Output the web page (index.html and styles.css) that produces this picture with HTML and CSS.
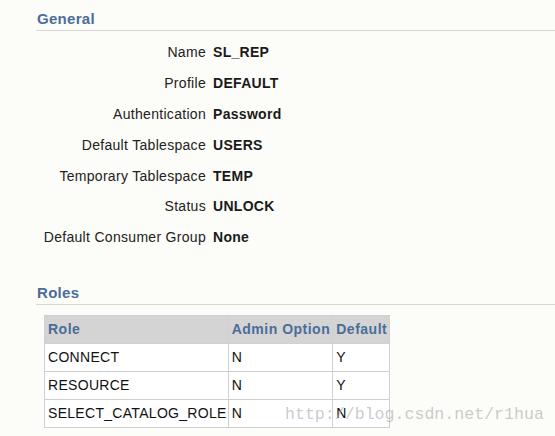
FILE: index.html
```html
<!DOCTYPE html>
<html lang="en">
<head>
    <meta charset="UTF-8">
    <title>User SL_REP</title>
    <link rel="stylesheet" href="styles.css">
</head>
<body>
    <div class="pagina">
        <h2 class="secao">General</h2>
        <div class="geral">
            <span class="rotulo">Name</span><span class="valor">SL_REP</span>
            <span class="rotulo">Profile</span><span class="valor">DEFAULT</span>
            <span class="rotulo">Authentication</span><span class="valor">Password</span>
            <span class="rotulo">Default Tablespace</span><span class="valor">USERS</span>
            <span class="rotulo">Temporary Tablespace</span><span class="valor">TEMP</span>
            <span class="rotulo">Status</span><span class="valor">UNLOCK</span>
            <span class="rotulo">Default Consumer Group</span><span class="valor">None</span>
        </div>

        <h2 class="secao roles">Roles</h2>
        <table class="tabela">
            <thead>
                <tr><th>Role</th><th>Admin Option</th><th>Default</th></tr>
            </thead>
            <tbody>
                <tr><td>CONNECT</td><td>N</td><td>Y</td></tr>
                <tr><td>RESOURCE</td><td>N</td><td>Y</td></tr>
                <tr><td>SELECT_CATALOG_ROLE</td><td>N</td><td>N</td></tr>
            </tbody>
        </table>
    </div>
    <div class="marca">http://blog.csdn.net/r1hua</div>
</body>
</html>
```

FILE: styles.css
```css
body {
    margin: 0;
    background-color: #fcfcf8;
    font-family: "Liberation Sans", Arial, sans-serif;
    color: #111;
    position: relative;
    height: 436px;
    overflow: hidden;
}

.pagina {
    padding: 10px 0 0 36px;
}

.secao {
    margin: 0;
    font-size: 15px;
    line-height: 18px;
    font-weight: bold;
    letter-spacing: 0.3px;
    color: #4a6d99;
    padding: 0 0 2px 1px;
    border-bottom: 1px solid #d6d6d4;
}

.geral {
    display: grid;
    grid-template-columns: 170px auto;
    column-gap: 7px;
    grid-auto-rows: 30.8px;
    align-items: center;
    margin-top: 6px;
    font-size: 14px;
    letter-spacing: 0.3px;
}

.rotulo {
    text-align: right;
    color: #222;
}

.valor {
    font-weight: bold;
    color: #1a1a1a;
}

.roles {
    margin-top: 31px;
}

.tabela {
    margin: 10px 0 0 8px;
    border-collapse: collapse;
    font-size: 14px;
    letter-spacing: 0.3px;
}

.tabela th {
    background-color: #d4d4d4;
    color: #4a6d99;
    text-align: left;
    font-weight: bold;
    letter-spacing: 0.5px;
    height: 27px;
    padding: 0 2px 0 3px;
    border: 1px solid #d0d0d0;
    border-left-color: #ececec;
}

.tabela th:first-child {
    border-left-color: #d0d0d0;
}

.tabela td {
    background-color: #fff;
    height: 27px;
    padding: 0 1px 0 3px;
    border: 1px solid #d0d0d0;
}

.marca {
    position: absolute;
    left: 285px;
    top: 405px;
    font-family: "Liberation Mono", monospace;
    font-size: 16.6px;
    color: rgba(160, 160, 160, 0.55);
}
```
